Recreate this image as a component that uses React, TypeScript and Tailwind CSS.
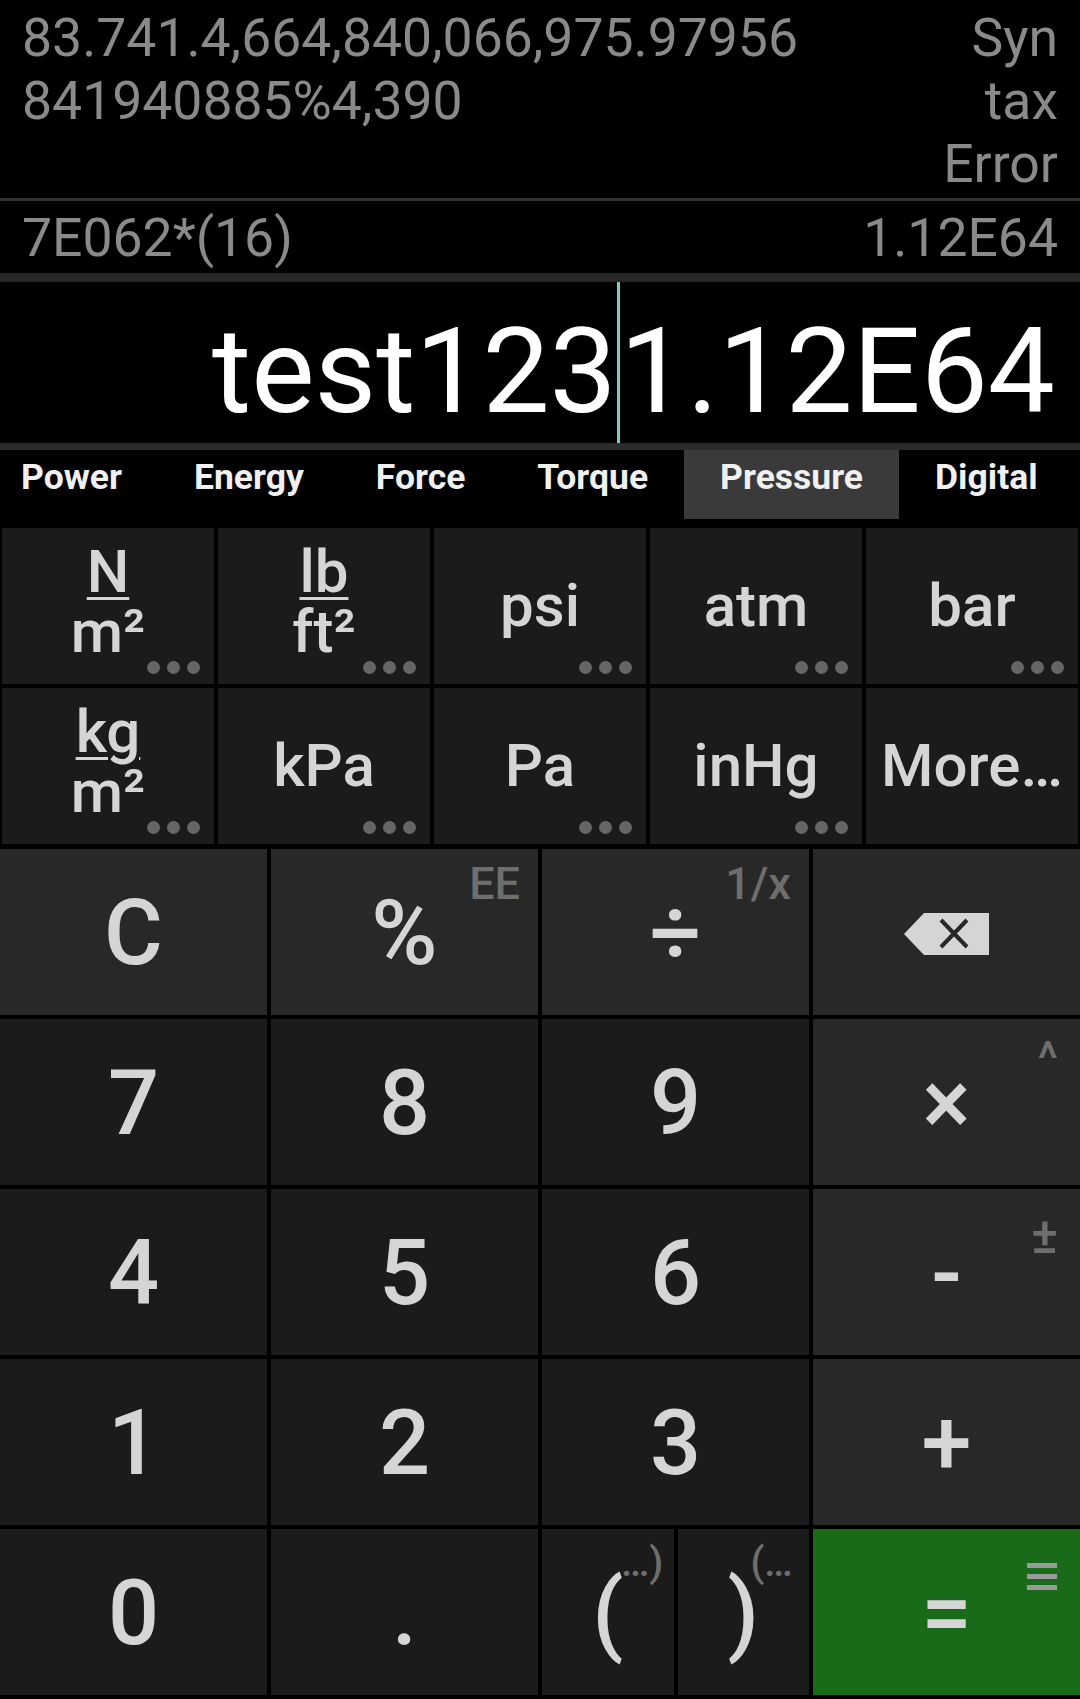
import type { ReactNode } from "react";

type Unidade = {
  rotulo?: string;
  num?: string;
  den?: string;
  pontos: boolean;
};

const abas = ["Power", "Energy", "Force", "Torque", "Pressure", "Digital"];
const abaAtiva = "Pressure";

const unidades: Unidade[] = [
  { num: "N", den: "m²", pontos: true },
  { num: "lb", den: "ft²", pontos: true },
  { rotulo: "psi", pontos: true },
  { rotulo: "atm", pontos: true },
  { rotulo: "bar", pontos: true },
  { num: "kg", den: "m²", pontos: true },
  { rotulo: "kPa", pontos: true },
  { rotulo: "Pa", pontos: true },
  { rotulo: "inHg", pontos: true },
  { rotulo: "More…", pontos: false },
];

function Pontos() {
  return (
    <span className="absolute bottom-[10px] right-[14px] flex gap-[7px]">
      <span className="h-[13px] w-[13px] rounded-full bg-[#666666]" />
      <span className="h-[13px] w-[13px] rounded-full bg-[#666666]" />
      <span className="h-[13px] w-[13px] rounded-full bg-[#666666]" />
    </span>
  );
}

function TeclaUnidade({ unidade }: { unidade: Unidade }) {
  return (
    <button
      className="relative flex items-center justify-center bg-[#1b1b1b] text-[60px] font-medium leading-[60px] text-[#d5d5d5]"
      type="button"
    >
      {unidade.num ? (
        <span className="flex flex-col items-center pb-[9px]">
          <span className="underline decoration-[3px] underline-offset-[5px]">{unidade.num}</span>
          <span>{unidade.den}</span>
        </span>
      ) : (
        <span>{unidade.rotulo}</span>
      )}
      {unidade.pontos ? <Pontos /> : null}
    </button>
  );
}

function Secundario({ children, className }: { children: ReactNode; className: string }) {
  return (
    <span className={`absolute font-medium text-[#6e6e6e] ${className}`}>
      {children}
    </span>
  );
}

// fundo: "digito" | "funcao" | "igual"
function Tecla({
  children,
  fundo = "digito",
  extra,
}: {
  children: ReactNode;
  fundo?: "digito" | "funcao" | "igual";
  extra?: ReactNode;
}) {
  const cores = {
    digito: "bg-[#1b1b1b]",
    funcao: "bg-[#282828]",
    igual: "bg-[#1a6b19]",
  };

  return (
    <button
      className={`relative flex items-center justify-center text-[90px] font-medium leading-[90px] text-[#d5d5d5] ${cores[fundo]}`}
      type="button"
    >
      <span className="pt-[4px]">{children}</span>
      {extra}
    </button>
  );
}

function IconeApagar() {
  return (
    <svg width="85" height="42" viewBox="0 0 85 42">
      <path d="M20 0 H85 V42 H20 L0 21 Z" fill="#d5d5d5" />
      <path d="M37 7 L63 34 M63 7 L37 34" stroke="#282828" strokeWidth="4" />
    </svg>
  );
}

function IconeHistorico() {
  return (
    <span className="absolute right-[23px] top-[34px] flex flex-col gap-[6px]">
      <span className="h-[5px] w-[30px] bg-[#9a9a9a]" />
      <span className="h-[5px] w-[30px] bg-[#9a9a9a]" />
      <span className="h-[5px] w-[30px] bg-[#9a9a9a]" />
    </span>
  );
}

export default function App() {
  return (
    <div className="flex h-[1699px] w-[1080px] flex-col overflow-hidden bg-black font-['Roboto',sans-serif]">
      {/* historico */}
      <div className="flex h-[198px] justify-between px-[22px] pt-[6px] text-[53.5px] leading-[63px] text-[#8a8a8a]">
        <div>
          <p>83.741.4,664,840,066,975.97956</p>
          <p>841940885%4,390</p>
        </div>
        <div className="text-right">
          <p>Syn</p>
          <p>tax</p>
          <p>Error</p>
        </div>
      </div>
      <div className="h-[3px] bg-[#333333]" />
      <div className="flex h-[72px] items-center justify-between px-[22px] text-[53.5px] leading-[63px] text-[#8a8a8a]">
        <span>7E062*(16)</span>
        <span>1.12E64</span>
      </div>
      <div className="h-[9px] bg-[#262626]" />

      {/* visor */}
      <div className="flex h-[161px] justify-end pr-[25px] text-[119.5px] leading-[119.5px] text-white">
        <span className="self-end pb-[12px]">test123</span>
        <span className="w-[3px] self-stretch bg-[#80cbc4]" />
        <span className="self-end pb-[12px]">1.12E64</span>
      </div>
      <div className="h-[7px] bg-[#2b2b2b]" />

      {/* abas */}
      <div className="ml-[-15px] flex h-[69px]">
        {abas.map((aba) => (
          <div
            className={`shrink-0 px-[36px] pt-[6px] text-[35.5px] font-bold leading-[42px] text-[#f0f0f0] ${
              aba === abaAtiva ? "bg-[#3a3a3a]" : ""
            }`}
            key={aba}
          >
            {aba}
          </div>
        ))}
      </div>

      {/* unidades */}
      <div className="mt-[9px] grid grid-cols-5 grid-rows-[156px_156px] gap-[4px] px-[2px]">
        {unidades.map((unidade, indice) => (
          <TeclaUnidade key={indice} unidade={unidade} />
        ))}
      </div>

      {/* teclado */}
      <div className="mt-[5px] grid grid-cols-4 grid-rows-[repeat(5,166px)] gap-[4px]">
        <Tecla fundo="funcao">C</Tecla>
        <Tecla
          extra={<Secundario className="right-[18px] top-[12px] text-[45px] leading-[45px]">EE</Secundario>}
          fundo="funcao"
        >
          %
        </Tecla>
        <Tecla
          extra={<Secundario className="right-[18px] top-[12px] text-[45px] leading-[45px]">1/x</Secundario>}
          fundo="funcao"
        >
          ÷
        </Tecla>
        <Tecla fundo="funcao">
          <IconeApagar />
        </Tecla>

        <Tecla>7</Tecla>
        <Tecla>8</Tecla>
        <Tecla>9</Tecla>
        <Tecla
          extra={<Secundario className="right-[22px] top-[16px] text-[48px] leading-[48px]">^</Secundario>}
          fundo="funcao"
        >
          ×
        </Tecla>

        <Tecla>4</Tecla>
        <Tecla>5</Tecla>
        <Tecla>6</Tecla>
        <Tecla
          extra={<Secundario className="right-[22px] top-[22px] text-[50px] leading-[50px]">±</Secundario>}
          fundo="funcao"
        >
          -
        </Tecla>

        <Tecla>1</Tecla>
        <Tecla>2</Tecla>
        <Tecla>3</Tecla>
        <Tecla fundo="funcao">+</Tecla>

        <Tecla>0</Tecla>
        <Tecla>.</Tecla>
        <div className="grid grid-cols-2 gap-[4px]">
          <Tecla
            extra={<Secundario className="left-[79px] top-[14px] text-[40px] leading-[40px]">…)</Secundario>}
          >
            (
          </Tecla>
          <Tecla
            extra={<Secundario className="left-[73px] top-[14px] text-[40px] leading-[40px]">(…</Secundario>}
          >
            )
          </Tecla>
        </div>
        <Tecla extra={<IconeHistorico />} fundo="igual">
          =
        </Tecla>
      </div>
    </div>
  );
}
